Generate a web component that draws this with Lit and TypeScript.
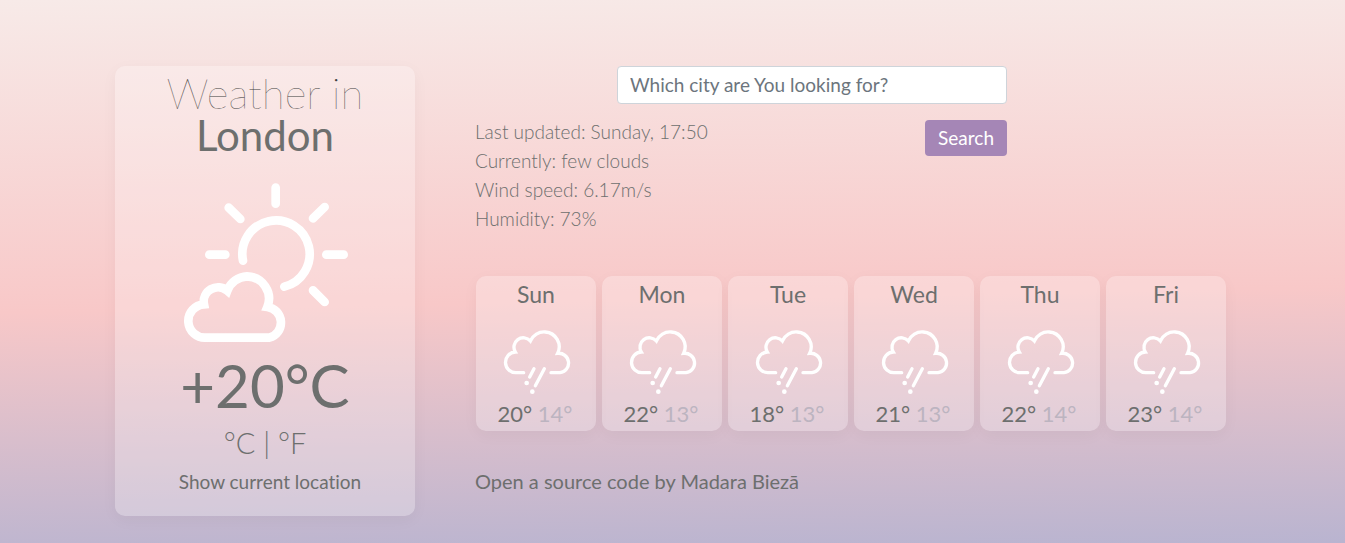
import { LitElement, html, css, svg } from "lit";
import { customElement, property, state } from "lit/decorators.js";

interface Day {
  name: string;
  high: number;
  low: number;
}

const partlyCloudy = html`<svg class="icon" viewBox="0 0 600 570" aria-hidden="true">
  ${svg`<g fill="none" stroke="#fff" stroke-width="26" stroke-linecap="round">
    <path d="M219 272A101 101 0 1 1 343 350" />
    <path d="M317 53V101M176 113L211 147M464 111L429 145M118 254H166M469 254H521M429 361L464 396" />
    <path d="M108 503A50 50 0 0 1 102 403A43 43 0 0 1 172 362A67 67 0 0 1 231 319A67 67 0 0 1 292 411A47 47 0 0 1 298 503Z" stroke-linecap="butt" />
  </g>`}
</svg>`;

const rain = html`<svg class="icon" viewBox="-4 0 255 240" aria-hidden="true">
  ${svg`<g fill="none" stroke="#fff" stroke-width="10" stroke-linecap="round">
    <path d="M85 158H63A31 31 0 0 1 60 96A28 28 0 0 1 105 63A44.6 44.6 0 0 1 150 36A44.6 44.6 0 0 1 187 100A29 29 0 1 1 194 158H167" />
    <path d="M116 146L103 171M147 146L120 197" />
  </g>
  <circle cx="94" cy="189" r="7" fill="#fff" />
  <circle cx="111" cy="215" r="7" fill="#fff" />`}
</svg>`;

@customElement("day-card")
export class DayCard extends LitElement {
  @property({ attribute: false }) day!: Day;

  static styles = css`
    :host {
      display: block;
      height: 155px;
      border-radius: 10px;
      background: rgba(255, 255, 255, 0.25);
      box-shadow: 0 4px 16px rgba(0, 0, 0, 0.04);
      text-align: center;
      font-size: 22px;
      line-height: 32px;
    }
    .name {
      margin: 0;
      padding-top: 2px;
      font-size: 23px;
      font-weight: 400;
    }
    .icon {
      display: block;
      width: 85px;
      height: 80px;
      margin: 10px auto 0;
    }
    .temps {
      margin: 0;
      padding-right: 2px;
      line-height: 28px;
    }
    .low {
      color: #bcb4c0;
    }
  `;

  render() {
    return html`<h2 class="name">${this.day.name}</h2>
      ${rain}
      <p class="temps">${this.day.high}° <span class="low">${this.day.low}°</span></p>`;
  }
}

@customElement("app-root")
export class AppRoot extends LitElement {
  @state() private days: Day[] = [
    { name: "Sun", high: 20, low: 14 },
    { name: "Mon", high: 22, low: 13 },
    { name: "Tue", high: 18, low: 13 },
    { name: "Wed", high: 21, low: 13 },
    { name: "Thu", high: 22, low: 14 },
    { name: "Fri", high: 23, low: 14 },
  ];

  static styles = css`
    :host {
      display: block;
      box-sizing: border-box;
      min-height: 100vh;
      padding: 66px 24px 27px;
      background: linear-gradient(178.9deg, #f7eae8 0%, #f8c8c8 55%, #b9b4d0 100%);
      color: #6d6f6e;
      font-family: Lato, "Open Sans", sans-serif;
      font-size: 19px;
      line-height: 29px;
      font-variant-ligatures: none;
    }
    .page {
      display: grid;
      grid-template-columns: 300px 1fr;
      column-gap: 60px;
      max-width: 1115px;
      margin: 0 auto;
    }
    .current {
      box-sizing: border-box;
      min-height: 450px;
      padding: 6px 0 20px;
      border-radius: 10px;
      background: rgba(255, 255, 255, 0.25);
      box-shadow: 0 4px 16px rgba(0, 0, 0, 0.04);
      text-align: center;
    }
    .title {
      margin: 0;
      font-size: 42px;
      line-height: 42px;
      font-weight: 100;
      color: #3f4140;
    }
    .city {
      display: block;
      font-weight: 400;
      color: #6d6f6e;
    }
    .current .icon {
      display: block;
      width: 200px;
      height: 190px;
      margin: 14px auto 0;
      padding-left: 10px;
    }
    .temperature {
      margin: 0;
      font-size: 60px;
      line-height: 50px;
    }
    .units {
      margin: 9px 0 0;
      font-size: 29px;
      line-height: 48px;
      font-weight: 300;
    }
    a {
      color: inherit;
      text-decoration: none;
    }
    .locate {
      padding: 0 0 0 10px;
      border: 0;
      background: none;
      color: inherit;
      font: inherit;
      cursor: pointer;
    }
    .search {
      display: grid;
      row-gap: 13px;
      max-width: 532px;
    }
    .query {
      box-sizing: border-box;
      justify-self: end;
      width: 390px;
      height: 38px;
      padding: 0 12px 2px;
      border: 1px solid #ced4da;
      border-radius: 4px;
      background: #fff;
      color: #495057;
      font: inherit;
    }
    .query::placeholder {
      color: #6c757d;
      opacity: 1;
    }
    .row {
      display: flex;
      justify-content: space-between;
      align-items: flex-start;
    }
    .facts {
      margin: 0;
      padding: 0;
      list-style: none;
      font-weight: 300;
    }
    .submit {
      height: 36px;
      margin-top: 3px;
      padding: 0 13px 2px;
      border: 0;
      border-radius: 4px;
      background: #a586b6;
      color: #fff;
      font: inherit;
    }
    .days {
      display: grid;
      grid-template-columns: repeat(6, 120px);
      gap: 6px;
      margin-top: 43px;
      padding: 0 1px;
    }
    .credit {
      margin: 36px 0 0;
      font-size: 20px;
    }
  `;

  render() {
    return html`<main class="page">
      <section class="current">
        <h1 class="title">Weather in <span class="city">London</span></h1>
        ${partlyCloudy}
        <p class="temperature">+20°C</p>
        <p class="units"><a href="#celsius">°C</a> | <a href="#fahrenheit">°F</a></p>
        <button class="locate" type="button">Show current location</button>
      </section>
      <section>
        <form class="search" @submit=${(e: Event) => e.preventDefault()}>
          <input class="query" type="text" aria-label="City" placeholder="Which city are You looking for?" />
          <div class="row">
            <ul class="facts">
              <li>Last updated: Sunday, 17:50</li>
              <li>Currently: few clouds</li>
              <li>Wind speed: 6.17m/s</li>
              <li>Humidity: 73%</li>
            </ul>
            <button class="submit" type="submit">Search</button>
          </div>
        </form>
        <div class="days">${this.days.map((day) => html`<day-card .day=${day}></day-card>`)}</div>
        <p class="credit"><a href="#source">Open a source code by Madara Biezā</a></p>
      </section>
    </main>`;
  }
}
